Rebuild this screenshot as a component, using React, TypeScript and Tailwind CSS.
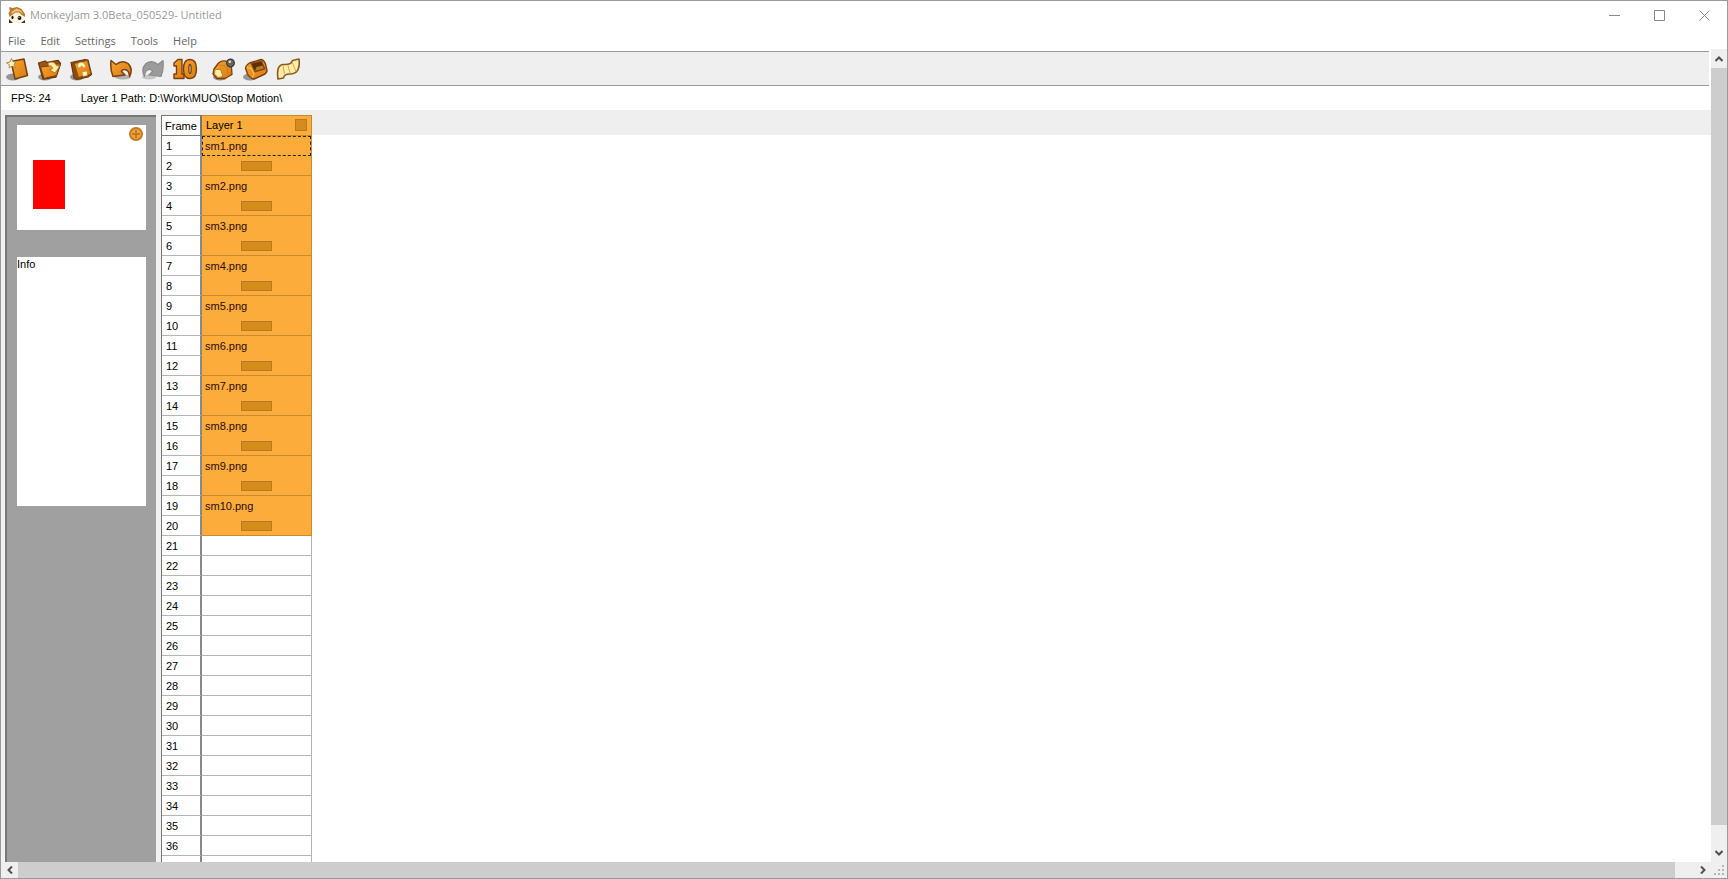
import type { ReactNode } from "react";

const MENUS = ["File", "Edit", "Settings", "Tools", "Help"];

const EXPOSED = 10;
const ROWS = 36;

type Row = { frame: number; file?: string; held?: boolean };

/* Every image is held for two frames, the remaining rows stay empty. */
const rows: Row[] = Array.from({ length: ROWS }, (_, i) => {
  const frame = i + 1;
  if (frame > EXPOSED * 2) return { frame };
  return frame % 2 ? { frame, file: `sm${(frame + 1) / 2}.png` } : { frame, held: true };
});

function MonkeyIcon() {
  return (
    <svg width="18" height="18" viewBox="0 0 18 18" className="block">
      <path d="M2.500 8 L8 4 L14 6 L16.500 10 V15.500 L14 17 H4 L2 15.500 Z" fill="#faf3e0" />
      <path d="M1 1 L4.500 2 L9 1 L13.500 3 L17 8 V11 L14 9 L11 6.500 L7.500 6.500 L4 9 L1.500 11 L0.500 7 L2 5 Z" fill="#b87a2c" />
      <path d="M3.500 6 L8.500 2.500 L13 4.500 L15 8 L11.500 5.500 L8 5.200 L3.500 8 Z" fill="#f2c478" />
      <ellipse cx="4.500" cy="11.500" rx="1.100" ry="1.700" fill="#2a1a0c" />
      <ellipse cx="11.500" cy="12" rx="1.900" ry="2" fill="#1a120a" />
      <circle cx="11" cy="11.300" r="0.6" fill="#fff" />
      <path d="M1 13 V17 H5 Z M13 17 L17 14 V17 Z" fill="#3d3324" />
    </svg>
  );
}

function Glyph({ children }: { children: ReactNode }) {
  return (
    <svg width="26" height="26" viewBox="0 0 26 26" className="block" strokeLinejoin="round">
      <defs>
        <linearGradient id="amber" x1="0" y1="0" x2="1" y2="1">
          <stop offset="0%" stopColor="#f7a52f" />
          <stop offset="100%" stopColor="#d87a12" />
        </linearGradient>
      </defs>
      {children}
    </svg>
  );
}

function Shadow({ cx = 8 }: { cx?: number }) {
  return <ellipse cx={cx} cy="21" rx="7" ry="3.5" fill="#777" opacity="0.75" />;
}

const NewIcon = (
  <Glyph>
    <Shadow />
    <path d="M6 5.500 L19 3 L22.500 19.500 L10 23 Z" fill="url(#amber)" stroke="#7a3f0c" strokeWidth="1.500" />
    <path d="M6.500 2.500 L8 5.800 L11 5.800 L9 8.300 L10.500 11.500 L7 10 L4.200 12 L4.300 8.600 L1.500 6.800 L5 6 Z" fill="#fff6b8" stroke="#a07436" strokeWidth="0.8" />
  </Glyph>
);

const OpenIcon = (
  <Glyph>
    <Shadow />
    <path d="M1.500 7 L8 5 L10 6.500 L21 4.500 L23.500 7.500 L19 21 L6 23 Z" fill="#9a5714" stroke="#6b380b" strokeWidth="1.300" />
    <path d="M3.500 11 L12 10 L14 8 L23.500 8 L19.500 19.500 L7 22.500 Z" fill="url(#amber)" stroke="#7a3f0c" strokeWidth="1" />
    <path d="M11 7 Q17 4 19.500 9.500 L22.500 10.500 L18 17 L12.500 14 L15.500 12.500 Q15 9 11.500 10 Z" fill="#fff0a0" stroke="#a8671c" strokeWidth="0.8" />
  </Glyph>
);

const SaveIcon = (
  <Glyph>
    <Shadow />
    <path d="M2 6.500 L16 3.500 L19 4 L22.500 18.500 L19 21 L8 23.500 L5 22 Z" fill="#8e4d10" stroke="#6b380b" strokeWidth="1.200" />
    <path d="M5.500 7.500 L18.500 4.500 L22 18 L9.500 21.500 Z" fill="url(#amber)" stroke="#7a3f0c" strokeWidth="0.700" />
    <path d="M8.500 11 Q8.500 6.500 12 6.300 Q16 6.500 17 11 L14.500 12 L12.500 9.800 L11 12 Z M13 16 L18 15 L18.500 19.500 L14 20.500 Z" fill="#fff6b8" stroke="#a8671c" strokeWidth="0.4" />
  </Glyph>
);

const UNDO = "M3 4.500 L8 8.500 Q14 3.500 20 7.500 Q25.500 13 21.500 20.500 Q21 13.500 16.500 13.500 Q14 13.500 13.500 15.500 L17 19 L5 20.500 Q2 14 3 4.500 Z";

const UndoIcon = (
  <Glyph>
    <ellipse cx="15" cy="21" rx="8" ry="2.500" fill="#888" opacity="0.6" />
    <path d={UNDO} fill="url(#amber)" stroke="#7a3f0c" strokeWidth="1.500" />
  </Glyph>
);

const RedoIcon = (
  <Glyph>
    <ellipse cx="9" cy="21" rx="7" ry="2.500" fill="#aaa" opacity="0.6" />
    <g transform="translate(26 0) scale(-1 1)">
      <path d={UNDO} fill="#9b9b9b" stroke="#8a8a8a" strokeWidth="1.200" />
    </g>
  </Glyph>
);

const TenIcon = (
  <Glyph>
    <g fill="url(#amber)" stroke="#7a3f0c" strokeWidth="1.400">
      <path d="M2 7 L6 3.500 H10 V18 H12 V22.500 H2 V18 H4.500 V10 H2 Z" />
      <path fillRule="evenodd" d="M18 3.500 C22.500 3.500 24.500 7 24.500 13 C24.500 19 22.500 22.500 18 22.500 C13.500 22.500 11.500 19 11.500 13 C11.500 7 13.500 3.500 18 3.500 Z M18 8.500 C16.500 8.500 16.500 17.500 18 17.500 C19.500 17.500 19.500 8.500 18 8.500 Z" />
    </g>
  </Glyph>
);

const CaptureIcon = (
  <Glyph>
    <Shadow cx={9} />
    <path d="M3 13 L7.500 7 Q12 3.500 17 6 L20.500 12 L21 18.500 L14 22.500 L6 22.500 L2 18 Z" fill="url(#amber)" stroke="#7a3f0c" strokeWidth="1.300" />
    <path d="M4 13.500 L9.500 13.500 L12 20.500 L7 21.500 L3.500 18 Z" fill="#fff0a0" stroke="#a8671c" strokeWidth="0.7" />
    <path d="M7.500 9 L13 9.500 L16 11.500 L17 18" fill="none" stroke="#c8801e" strokeWidth="1" />
    <circle cx="19.500" cy="7" r="3.800" fill="#6b665d" stroke="#3d3a35" strokeWidth="1.300" />
    <circle cx="18.800" cy="5.800" r="1.300" fill="#ddd" />
  </Glyph>
);

const PreviewIcon = (
  <Glyph>
    <Shadow cx={7} />
    <path d="M2.500 12 Q3 9 6.500 7 L18 3.500 Q21 4 22.500 8 L24 14.500 Q24 17 21 18.500 L11 23 Q7 22.500 4.500 18 Z" fill="url(#amber)" stroke="#7a3f0c" strokeWidth="1.400" />
    <path d="M8 7.500 L18.500 5 L22 13 L12 16 Z" fill="#5a300a" stroke="#8a4a10" strokeWidth="1" />
    <path d="M12 15 L13.500 11 L19.500 9.500 L21 12.500 Z" fill="#b9791f" />
    <path d="M4 12 L8 12 L11 18 L9.500 21.500" fill="none" stroke="#ffc668" strokeWidth="1" />
  </Glyph>
);

const ExportIcon = (
  <Glyph>
    <path d="M3 13 Q5 8 9 8.500 Q16 9 17.500 4.500 L24 3 Q25 10 22.500 14.500 Q20 18 15 18 Q9 18 8.500 22 L3 23 Q2 18 3 13 Z" fill="#ffeea6" stroke="#8b5a1c" strokeWidth="1.600" />
    <path d="M8 9.500 L9.500 18 M13 9.500 L15 17.500 M17.500 7 L21 15.500" fill="none" stroke="#d8a54a" strokeWidth="1" />
  </Glyph>
);

const TOOLS: { label: string; icon: ReactNode }[][] = [
  [
    { label: "New", icon: NewIcon },
    { label: "Open", icon: OpenIcon },
    { label: "Save", icon: SaveIcon },
  ],
  [
    { label: "Undo", icon: UndoIcon },
    { label: "Redo", icon: RedoIcon },
    { label: "Frame hold", icon: TenIcon },
  ],
  [
    { label: "Capture", icon: CaptureIcon },
    { label: "Preview", icon: PreviewIcon },
    { label: "Export", icon: ExportIcon },
  ],
];

function TitleBar() {
  return (
    <header className="flex h-7 items-center pl-[7px]">
      <MonkeyIcon />
      <h1 className="ml-1 flex-1 font-['Open_Sans',sans-serif] text-[11px] text-[#999]">
        MonkeyJam 3.0Beta_050529- Untitled
      </h1>
      <div className="flex">
        <button aria-label="Minimize" className="grid h-7 w-[45px] place-items-center">
          <svg width="11" height="11" stroke="#888"><path d="M0 5.500 H11" /></svg>
        </button>
        <button aria-label="Maximize" className="grid h-7 w-[45px] place-items-center">
          <svg width="11" height="11" fill="none" stroke="#888"><path d="M.5 .5 H10.500 V10.500 H.5 Z" /></svg>
        </button>
        <button aria-label="Close" className="grid h-7 w-[45px] place-items-center">
          <svg width="11" height="11" stroke="#888"><path d="M.5 .5 L10.500 10.500 M10.500 .5 L.5 10.500" /></svg>
        </button>
      </div>
    </header>
  );
}

function Toolbar() {
  return (
    <div role="toolbar" className="mt-0.5 mr-0.5 flex h-[35px] items-center gap-[7px] border-y border-[#999] bg-[#efefef] pl-1">
      {TOOLS.map((group, i) => (
        <div key={i} className="flex">
          {group.map((t) => (
            <button key={t.label} aria-label={t.label} className="flex w-8 justify-start">
              {t.icon}
            </button>
          ))}
        </div>
      ))}
    </div>
  );
}

function Sidebar() {
  return (
    <div className="flex shrink-0 bg-[#f2f2f2] pr-[5px] pl-1">
      <aside className="w-[151px] border-t-2 border-l-2 border-[#777] bg-[#a0a0a0] px-[10px] pt-2">
        <div className="relative h-[105px] bg-white pt-[35px] pl-4">
          <div className="h-[49px] w-8 bg-[#fe0000]" />
          <button aria-label="Zoom preview" className="absolute top-px right-0.5">
            <svg width="16" height="16" viewBox="0 0 16 16" className="block" stroke="#c27a1e" strokeWidth="2">
              <circle cx="8" cy="8" r="6" fill="#efa240" />
              <path d="M8 4 V12 M4 8 H12" />
            </svg>
          </button>
        </div>
        <div className="mt-[27px] h-[249px] bg-white leading-[14px]">Info</div>
      </aside>
    </div>
  );
}

function ExposureSheet() {
  return (
    <table className="h-fit w-[151px] table-fixed border-separate border-spacing-0 self-start border-l border-[#777] bg-white text-left leading-4">
      <colgroup>
        <col className="w-10" />
        <col className="w-[110px]" />
      </colgroup>
      <thead>
        <tr>
          <th className="h-[21px] border-t border-r-2 border-b border-[#777] p-0 pl-[3px] font-normal">Frame</th>
          <th className="h-[21px] border-t border-r border-b border-[#c98a2e] bg-[#fbac3b] p-0 pr-1 pb-0.5 pl-1 font-normal">
            <div className="flex items-center justify-between">
              Layer 1
              <span className="size-3 border border-[#b87a20] bg-[#d68c1c]" />
            </div>
          </th>
        </tr>
      </thead>
      <tbody>
        {rows.map((r) => (
          <tr key={r.frame}>
            <td className="h-5 border-r-2 border-b border-r-[#888] border-b-[#b4b4b4] p-0 pt-px pl-1">{r.frame}</td>
            {r.file ? (
              <td className="h-5 border-r border-[#c98a2e] bg-[#fbac3b] p-0 text-[#2c0a10]">
                <div
                  className={
                    r.frame === 1
                      ? "h-5 border border-dashed border-[#222] pl-[2px] leading-[19px]"
                      : "h-5 pl-[3px] leading-[21px]"
                  }
                >
                  {r.file}
                </div>
              </td>
            ) : r.held ? (
              <td className="h-5 border-r border-b border-[#c98a2e] bg-[#fbac3b] p-0">
                <div className="mx-auto h-2.5 w-[31px] border border-[#b87a20] bg-[#d68c1c]" />
              </td>
            ) : (
              <td className="h-5 border-r border-b border-[#b4b4b4] p-0" />
            )}
          </tr>
        ))}
        {/* rest of the column runs on below the last numbered frame */}
        <tr>
          <td className="h-5 border-r-2 border-[#888] p-0" />
          <td className="h-5 border-r border-[#b4b4b4] p-0" />
        </tr>
      </tbody>
    </table>
  );
}

function Arrow({ d }: { d: string }) {
  return (
    <svg width="8" height="8" viewBox="0 0 8 8" fill="none" stroke="#505050" strokeWidth="2">
      <path d={d} />
    </svg>
  );
}

function VScroll() {
  return (
    <div className="flex w-4 shrink-0 flex-col bg-[#efefef]">
      <button aria-label="Scroll up" className="grid h-[19px] place-items-center">
        <Arrow d="M.5 6 L4 2.500 L7.500 6" />
      </button>
      <div className="flex-1 bg-[#cdcdcd]" />
      <button aria-label="Scroll down" className="mt-[19px] grid h-[18px] place-items-center">
        <Arrow d="M.5 2 L4 5.500 L7.500 2" />
      </button>
    </div>
  );
}

function HScroll() {
  return (
    <div className="flex h-4 shrink-0 bg-[#efefef]">
      <button aria-label="Scroll left" className="grid w-[17px] place-items-center">
        <Arrow d="M6 .5 L2.500 4 L6 7.500" />
      </button>
      <div className="flex-1 bg-[#cdcdcd]" />
      <button aria-label="Scroll right" className="ml-[19px] grid w-[17px] place-items-center">
        <Arrow d="M2 .5 L5.500 4 L2 7.500" />
      </button>
      <div className="grid w-4 place-items-center">
        <svg width="10" height="10" fill="#b5b5b5">
          <path d="M8 0h2v2h-2zM4 4h2v2h-2zM8 4h2v2h-2zM0 8h2v2h-2zM4 8h2v2h-2zM8 8h2v2h-2z" />
        </svg>
      </div>
    </div>
  );
}

export default function App() {
  return (
    <div className="flex h-screen flex-col overflow-hidden border border-[#999] bg-white font-['Liberation_Sans',Arial,sans-serif] text-[11px] text-black">
      <TitleBar />
      <nav className="flex h-5 items-center gap-[15px] pt-1 pl-[7px] font-['Open_Sans',sans-serif] text-[#666]">
        {MENUS.map((m) => (
          <button key={m}>{m}</button>
        ))}
      </nav>
      <div className="flex min-h-0 flex-1">
        <div className="flex min-w-0 flex-1 flex-col">
          <Toolbar />
          <div className="flex h-6 shrink-0 items-center gap-[30px] pl-[10px]">
            <span>FPS: 24</span>
            <span>Layer 1 Path: D:\Work\MUO\Stop Motion\</span>
          </div>
          <div className="flex min-h-0 flex-1 overflow-hidden bg-linear-to-b from-[#efefef] from-[25px] to-white to-[25px] pt-[5px]">
            <Sidebar />
            <div className="flex overflow-hidden">
              <ExposureSheet />
            </div>
          </div>
        </div>
        <VScroll />
      </div>
      <HScroll />
    </div>
  );
}
